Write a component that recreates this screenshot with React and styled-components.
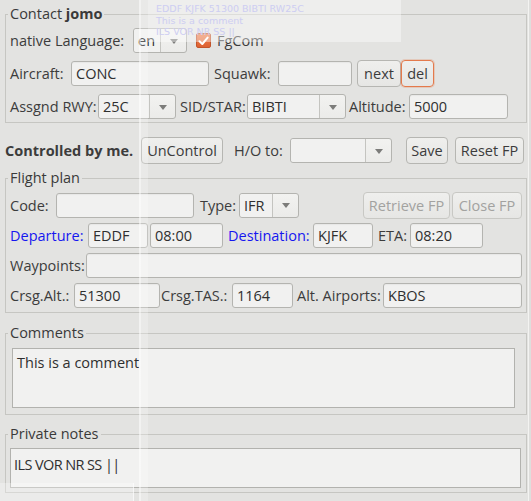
import React from 'react';
import styled, { createGlobalStyle } from 'styled-components';

const GlobalStyle = createGlobalStyle`
  html, body {
    margin: 0;
    padding: 0;
    background: #dededc;
  }
  body {
    font-family: "Open Sans", "DejaVu Sans", sans-serif;
    font-size: 14px;
    color: #3c3c3c;
  }
`;

const Page = styled.div`
  position: relative;
  box-sizing: border-box;
  width: 529px;
  height: 501px;
  padding: 5px 1px 0 5px;
  background: #e3e3e1;
  border-right: 1px solid #f3f3f1;
  overflow: hidden;
`;

const Group = styled.fieldset`
  margin: ${p => p.$mt || 0}px 0 0 0;
  padding: ${p => p.$pt || 4}px 4px ${p => p.$pb || 2}px 4px;
  border: 1px solid #c6c6c2;
  min-width: 0;
`;

const Legend = styled.legend`
  padding: 0 2px;
  margin-left: -2px;
  line-height: 18px;
  font-size: 14.5px;
  color: #3a3a3a;

  b {
    font-weight: 700;
  }
`;

const Rows = styled.div`
  display: flex;
  flex-direction: column;
  gap: ${p => p.$gap}px;
`;

const Row = styled.div`
  display: flex;
  align-items: center;
  height: ${p => p.$h || 27}px;
  margin-top: ${p => p.$mt || 0}px;
`;

const Label = styled.span`
  flex: none;
  width: ${p => p.$w}px;
  margin-left: ${p => p.$ml || 0}px;
  white-space: nowrap;
  font-size: 14.5px;
  color: ${p => (p.$blue ? '#1616f0' : '#3c3c3c')};
  font-weight: ${p => (p.$bold ? 700 : 400)};
`;

const Field = styled.div`
  flex: ${p => (p.$w ? 'none' : '1')};
  box-sizing: border-box;
  width: ${p => (p.$w ? `${p.$w}px` : 'auto')};
  height: 25px;
  margin-left: ${p => p.$ml || 0}px;
  padding: 0 4px;
  display: flex;
  align-items: center;
  background: #f1f1f0;
  border: 1px solid #b4b4b0;
  border-radius: 3px;
  box-shadow: inset 0 1px 1px rgba(0, 0, 0, 0.04);
  font-size: 14.5px;
  color: #2f2f2f;
  white-space: nowrap;
`;

const Combo = styled.div`
  flex: none;
  box-sizing: border-box;
  width: ${p => p.$w}px;
  height: 25px;
  display: flex;
  background: linear-gradient(#f2f2f0, #ebebe9);
  border: 1px solid #b4b4b0;
  border-radius: 3px;
  font-size: 14.5px;
  color: #2f2f2f;
`;

const ComboValue = styled.div`
  flex: 1;
  display: flex;
  align-items: center;
  padding-left: 4px;
  background: #f1f1f0;
  border-radius: 3px 0 0 3px;
  white-space: nowrap;
  overflow: hidden;
`;

const ComboArrow = styled.div`
  flex: none;
  width: 25px;
  display: flex;
  align-items: center;
  justify-content: center;
  border-left: 1px solid #c4c4c0;

  &::after {
    content: '';
    border-left: 4px solid transparent;
    border-right: 4px solid transparent;
    border-top: 5px solid #7c7c7a;
    margin-top: 1px;
  }
`;

const Button = styled.button`
  flex: none;
  box-sizing: border-box;
  width: ${p => p.$w}px;
  height: 27px;
  margin-left: ${p => p.$ml || 0}px;
  padding: 0;
  font-family: inherit;
  font-size: 14.5px;
  color: ${p => (p.disabled ? '#a2a2a0' : '#3c3c3c')};
  background: linear-gradient(#efefed, #e6e6e4);
  border: 1px solid ${p => (p.$focus ? '#e47a4c' : p.disabled ? '#c8c8c4' : '#b6b6b2')};
  border-radius: 4px;
  box-shadow: ${p => (p.$focus ? '0 0 0 1px rgba(228, 122, 76, 0.25)' : 'none')};
`;

const Check = styled.span`
  flex: none;
  box-sizing: border-box;
  width: 15px;
  height: 15px;
  margin-left: ${p => p.$ml || 0}px;
  display: flex;
  align-items: center;
  justify-content: center;
  background: linear-gradient(#ec7e4c, #de6132);
  border: 1px solid #c2542a;
  border-radius: 2px;
`;

const TextBox = styled.div`
  box-sizing: border-box;
  height: ${p => p.$h}px;
  margin: 0 ${p => p.$mr || 0}px 0 ${p => p.$ml || 0}px;
  padding: ${p => p.$pad || '4px 4px'};
  background: #f1f1f0;
  border: 1px solid #b2b2ae;
  font-size: 14.5px;
  color: #2f2f2f;
  letter-spacing: ${p => p.$ls || 0}px;
`;

const Band = styled.div`
  position: absolute;
  top: 0;
  left: 139px;
  width: 9px;
  height: 100%;
  background: linear-gradient(90deg, rgba(255,255,255,0.55) 0 2px, rgba(255,255,255,0.22) 2px);
  pointer-events: none;
`;

const Tag = styled.div`
  position: absolute;
  top: 0;
  left: 148px;
  width: 253px;
  height: 42px;
  box-sizing: border-box;
  padding: 3px 0 0 8px;
  background: rgba(255, 255, 255, 0.4);
  font-family: "DejaVu Sans", sans-serif;
  font-size: 9.5px;
  line-height: 11.5px;
  color: #cdcdf2;
  pointer-events: none;
`;

const Shade = styled.div`
  position: absolute;
  left: 0;
  top: 483px;
  width: 133px;
  height: 18px;
  background: rgba(255, 255, 255, 0.3);
  border-right: 1px solid rgba(255, 255, 255, 0.6);
  pointer-events: none;
`;

const Select = ({ w, value }) => (
  <Combo $w={w}>
    <ComboValue>{value}</ComboValue>
    <ComboArrow />
  </Combo>
);

const App = () => (
  <>
    <GlobalStyle />
    <Page>
      <Group $pt={4} $pb={2}>
        <Legend>Contact <b>jomo</b></Legend>
        <Rows $gap={6}>
          <Row>
            <Label $w={123}>native Language:</Label>
            <Select w={54} value="en" />
            <Check $ml={9}>
              <svg width="11" height="10" viewBox="0 0 11 10">
                <path d="M1.5 5.2 L4.3 8 L9.6 1.6" fill="none" stroke="#fff" strokeWidth="2" strokeLinecap="round" strokeLinejoin="round" />
              </svg>
            </Check>
            <Label $ml={6}>FgCom</Label>
          </Row>
          <Row>
            <Label $w={61}>Aircraft:</Label>
            <Field $w={138}>CONC</Field>
            <Label $ml={5} $w={64}>Squawk:</Label>
            <Field $w={74} />
            <Button $ml={5} $w={44}>next</Button>
            <Button $w={33} $focus>del</Button>
          </Row>
          <Row>
            <Label $w={88}>Assgnd RWY:</Label>
            <Select w={78} value="25C" />
            <Label $ml={4} $w={67}>SID/STAR:</Label>
            <Select w={99} value="BIBTI" />
            <Label $ml={3} $w={60}>Altitude:</Label>
            <Field $w={99}>5000</Field>
          </Row>
        </Rows>
      </Group>

      <Row $mt={14}>
        <Label $w={136} $bold>Controlled by me.</Label>
        <Button $w={82}>UnControl</Button>
        <Label $ml={11} $w={56}>H/O to:</Label>
        <Select w={102} value="" />
        <Button $ml={14} $w={42}>Save</Button>
        <Button $ml={7} $w={69}>Reset FP</Button>
      </Row>

      <Group $mt={5} $pt={5} $pb={4}>
        <Legend>Flight plan</Legend>
        <Rows $gap={4}>
          <Row $h={26}>
            <Label $w={46}>Code:</Label>
            <Field $w={138} />
            <Label $ml={6} $w={39}>Type:</Label>
            <Select w={60} value="IFR" />
            <Button $ml={64} $w={87} disabled>Retrieve FP</Button>
            <Button $ml={2} $w={70} disabled>Close FP</Button>
          </Row>
          <Row $h={26}>
            <Label $w={78} $blue>Departure:</Label>
            <Field $w={60}>EDDF</Field>
            <Field $ml={2} $w={73}>08:00</Field>
            <Label $ml={5} $w={85} $blue>Destination:</Label>
            <Field $w={60}>KJFK</Field>
            <Label $ml={5} $w={32}>ETA:</Label>
            <Field $w={73}>08:20</Field>
          </Row>
          <Row $h={26}>
            <Label $w={76}>Waypoints:</Label>
            <Field />
          </Row>
          <Row $h={26}>
            <Label $w={64}>Crsg.Alt.:</Label>
            <Field $w={86}>51300</Field>
            <Label $ml={1} $w={71}>Crsg.TAS.:</Label>
            <Field $w={61}>1164</Field>
            <Label $ml={4} $w={86}>Alt. Airports:</Label>
            <Field $w={139}>KBOS</Field>
          </Row>
        </Rows>
      </Group>

      <Group $mt={11} $pt={6} $pb={6}>
        <Legend>Comments</Legend>
        <TextBox $h={60} $ml={2} $mr={7}>This is a comment</TextBox>
      </Group>

      <Group $mt={10} $pt={5} $pb={4}>
        <Legend>Private notes</Legend>
        <TextBox $h={40} $mr={1} $ls={-0.6} $pad="6px 3px">ILS VOR NR SS ||</TextBox>
      </Group>

      <Band />
      <Tag>
        <div>EDDF KJFK 51300 BIBTI RW25C</div>
        <div>This is a comment</div>
        <div>ILS VOR NR SS ||</div>
      </Tag>
      <Shade />
    </Page>
  </>
);

export default App;
